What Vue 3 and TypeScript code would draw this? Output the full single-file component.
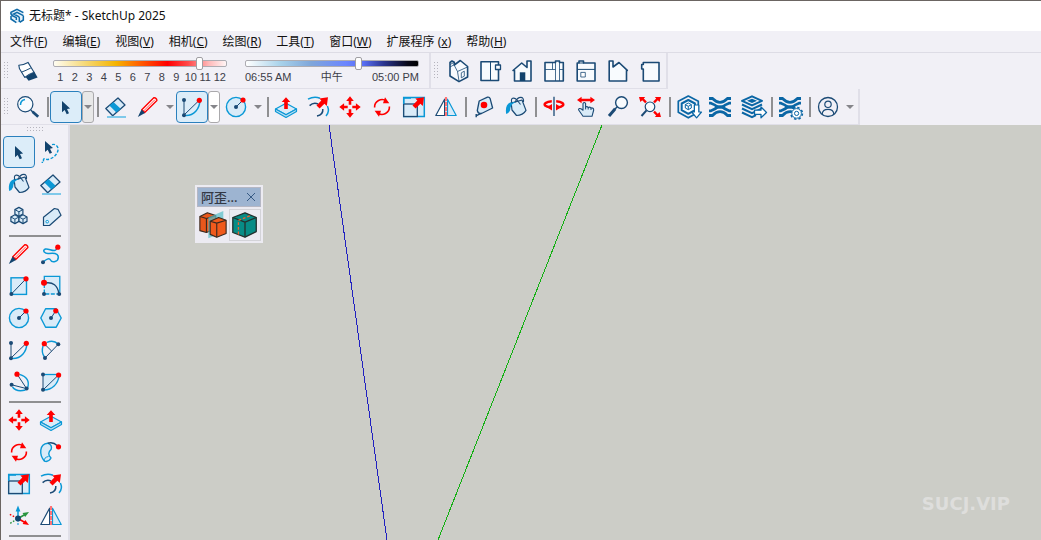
<script setup lang="ts">
import { ref } from 'vue'

interface Menu { label: string; key: string; spaced?: boolean }
interface Tool { kind: 'tool' | 'drop' | 'sep'; icon?: string; label?: string; active?: boolean; boxed?: 'grey' | 'white' }

const menus: Menu[] = [
  { label: '文件', key: 'F' },
  { label: '编辑', key: 'E' },
  { label: '视图', key: 'V' },
  { label: '相机', key: 'C' },
  { label: '绘图', key: 'R' },
  { label: '工具', key: 'T' },
  { label: '窗口', key: 'W' },
  { label: '扩展程序', key: 'x', spaced: true },
  { label: '帮助', key: 'H' },
]

const month = ref(86)
const time = ref(66)

const N = '#1b4a75'
const B = '#0a98d6'
const L = '#d9ebf8'
const R = '#ff0000'
const W = '#0a66a5'

const dot = (x: number, y: number, c = N, r = 2) => `<circle cx="${x}" cy="${y}" r="${r}" fill="${c}"/>`
const line = (d: string, c = N, w = 1, extra = '') => `<path d="${d}" fill="none" stroke="${c}" stroke-width="${w}" ${extra}/>`
const shape = (d: string, fill: string, stroke = 'none', w = 1.3) => `<path d="${d}" fill="${fill}" stroke="${stroke}" stroke-width="${w}" stroke-linejoin="round"/>`
const cube = (x: number, y: number) =>
  shape(`M${x} ${y - 4.4}l4 2.2v4.4l-4 2.2l-4-2.2v-4.4z`, L, N, 1.2) + line(`M${x - 4} ${y - 2.2}l4 2.2l4-2.2M${x} ${y}v4.4`, N, 1)

const diagonalArrow = shape('M22 2.2l-1.2 8.8l-2.4-2.3l-4.8 4.8l-3.1-3.1l4.8-4.8l-2-2z', R)
const weave =
  line('M1 3.5h3.5q7.5 7.6 15 0H23M1 8.2h2q4.5 1.6 6.4 3.8M23 8.2h-2q-4.5 1.6-6.4 3.8M1 20.5h3.5q7.5-7.6 15 0H23M1 15.8h2q4.5-1.6 6.4-3.8M23 15.8h-2q-4.5-1.6-6.4-3.8', W, 2.8) +
  line('M8 12h8', W, 3.4)

const icons: Record<string, string> = {
  logo: shape('M12 1L22 5.5V17.5L12 23L2 18V6z', '#e6f2fa') +
    line('M21.5 7L12 2L3 6.5Q2 10 6 12L11 14.5V18M21.5 11.5L12 6.5L7 9L14.5 13Q16 14 15.5 17.5V21M3 12v4.5L11 22M21.5 11.5V18L16 21.5', '#0f6aa8', 2.3),
  search: `<circle cx="9.3" cy="9.3" r="7.6" fill="#f8fbfe" stroke="${N}" stroke-width="1.2"/>` + line('M4.5 10Q4.5 5.5 9 4.6', B, 1.5) + line('M14.8 15l2.4 2.4', N, 1.4) + line('M16.6 16.8l5.6 5', N, 2.8),
  arrow: shape('M8 6v11.3l2.7-2.3l2 4.2l2.3-1l-2-4.2l3.1-.6z', '#12436d'),
  lasso: line('M13 4.6C17 3.6 20 7 18.8 11C17.6 16 12 19.5 8 19.5C6.5 19 5 18 4.5 19.5C4 21.5 6 22.5 2.6 22.4', B, 1.4, 'stroke-dasharray="3 1.6"') + shape('M6 1v11l2.7-2.3l2 4l2.3-1l-2-4l3-.6z', '#12436d'),
  eraser: shape('M14 3L21 10L8.7 20.7L1.8 13.5z', L, N, 1.3) + shape('M9.4 6.9L16.7 13.8L12.4 17.5L5.4 10.4z', B) + line('M3 22H22', '#72c4e9', 1.8),
  pencil: shape('M17.8 2.8Q20.8 2.6 20.9 5.6L8.7 17.6L5.8 14.8z', '#fff', R, 1.4) + line('M7.6 16L19 4.6', R, 0.7) + shape('M5.5 14.5L9 18L1.8 22z', '#12436d'),
  arc: line('M4 5V20L19 5.5') + line('M19.8 6C19.5 14 14 20.5 6 20.6', B, 1.5) + dot(4, 5) + dot(4, 20.3) + dot(19.3, 5.3, R, 2.6),
  circle: `<circle cx="12" cy="12" r="9.6" fill="${L}" stroke="${B}" stroke-width="1.4"/>` + line('M12 12L19 5') + dot(12, 12) + dot(19, 5, R, 2.6),
  push: shape('M12 8.3L22.5 14L12 19.8L1.5 14z', L, B, 1.2) + shape('M1.5 14L12 19.8L22.5 14V16.5L12 22.4L1.5 16.5z', '#bfe0f3', B, 1.2) + shape('M12 2.2l4.3 4.9h-2.5v7h-3.6v-7H7.7z', R),
  offset: line('M2 4.2Q8 .8 14 3.2M21.4 11Q24 16.6 20 21', B, 1.5) + line('M3.6 10.6Q7.5 7 12 9M16.8 14Q17.4 19.8 11 21', N, 1.5) + diagonalArrow,
  move: shape('M12 1.3l3.8 4.8h-2.5v3.6h-2.6V6.1H8.2zM12 22.7l-3.8-4.8h2.5v-3.6h2.6v3.6h2.5zM1.3 12l4.8-3.8v2.5h3.6v2.6H6.1v2.5zM22.7 12l-4.8 3.8v-2.5h-3.6v-2.6h3.6V8.2z', R),
  rotate: line('M4.6 12.5A7.5 7.5 0 0 1 16.5 6M19.4 11.5A7.5 7.5 0 0 1 7.5 18', R, 1.6) + shape('M15 2.3l4.3 5.9l-6.3 0zM9 21.7l-4.4-5.9h6.4z', R),
  scale: `<rect x="1.7" y="2.5" width="20.6" height="19" fill="${L}" stroke="${B}" stroke-width="1.5"/><rect x="1.7" y="9" width="13.6" height="12.5" fill="${L}" stroke="${N}" stroke-width="1.3"/>` + line('M1.7 9V3H9', B, 1.4) + diagonalArrow,
  mirror: shape('M10.6 4.2V20.5H1.8z', '#fff', N, 1.2) + shape('M13.5 4.2V20.5H22.2z', L, B, 1.2) + line('M12 2V22', '#ff7376', 2.1, 'stroke-dasharray="4 1"'),
  tape: shape('M7.2 6L15.5 2.2Q17.5 1.8 18.2 3.8L20.6 13L9.5 18.5Q6 19 5.3 15.5z', L, N, 1.3) + line('M9.5 18.2L4 20.8M4.2 19v3.2', N, 1.4) + dot(12, 10, R, 3.3),
  paint: shape('M7.2 8.2L18 5L22 15.4Q19 20.5 12.5 20.5L8 15z', L, N, 1.2) + shape('M2.2 19C.8 11 4 5.5 11.5 7.2C7 9 6.5 12 6.2 15Q5.2 18 2.2 19z', B) + line('M8 8C6 3 10 1.6 13 5L16.5 9.5M11 7.2C14 1 20.5.7 19.5 7', N, 1.1),
  orbit: line('M12 1.8V21', N, 1.3) + line('M9.8 6.3C4 6.7 1.5 9 3.2 10.6Q4.7 12 8.5 12.2M14.2 6.3C20.2 6.7 22.4 9 20.7 10.6Q19 12.2 15.5 12.3', R, 2.6) + shape('M10 8.9v6.7l-5.2-3.4zM14 8.9v6.7l5.2-3.4z', R),
  pan: shape('M9 21.3L4.5 14.8Q5 12.8 7 13.8L9 15.2V8.5Q10.3 6.6 11.6 8.5V12Q13 11 14.2 12.5Q15.8 11.6 17 13Q19.6 12.5 19.7 15L18 21.3z', L, N, 1.1) + line('M11.6 12v2.4M14.2 12.5v2M17 13v2', N, 1) + shape('M3 5l4.6-3.3v2h8.8v-2L21 5l-4.6 3.3v-2H7.6v2z', R),
  zoom: `<circle cx="15.5" cy="7.6" r="5.9" fill="#f8fbfe" stroke="${N}" stroke-width="1.4"/>` + line('M11.3 11.8L9 14', N, 1.5) + line('M9.2 13.8L3 21', N, 3),
  extents: `<circle cx="12" cy="11.8" r="4.8" fill="#f8fbfe" stroke="${N}" stroke-width="1.2"/>` + line('M8.5 15.4L3.5 21', N, 2) + shape('M1 2h6.2L5.8 3.6l3 3L7.2 8.2l-3-3L2.4 7zM23 2h-6.2l1.4 1.6l-3 3l1.6 1.6l3-3L21.6 7zM23 22h-6.2l1.4-1.6l-3-3l1.6-1.6l3 3l1.8-1.8z', R),
  warehouse: shape('M12.3 1l10 5.2v11L12.3 22.8l-10-5.6v-11z', '#f1f0f6', W, 1.7) + shape('M12.3 5l6.6 3.5v6.7l-6.6 3.6l-6.6-3.6V8.5z', '#f8fbfe', W, 2) + line('M12.3 8l3 1.6v3.4l-3 1.7l-3-1.7V9.6zM12.3 11.3l3-1.6M12.3 11.3v3.4M9.3 9.7l3 1.6', W, 1) + shape('M18.4 10h4.4v7h2.7l-4.9 5.8l-4.9-5.8h2.7z', '#fff', W, 1.2),
  weave,
  layers: shape('M12 1.3l10 4.5l-10 4.6L2 5.8z', '#f1f0f6', W, 2) + shape('M12 3.7l5 2.1l-5 2.2l-5-2.2z', W) + line('M2 9.5l10 4.6l10-4.6M2 13.5l10 4.6l10-4.6M2 17.5l10 4.6l4-2', W, 2) + shape('M14.5 15.2h6.5v-3.3l5.5 5.6l-5.5 5.3v-3.4h-6.5z', '#fff', W, 1.3),
  gearweave: weave + `<circle cx="18.6" cy="18.4" r="5.8" fill="#f1f0f6" stroke="${W}" stroke-width="1.6" stroke-dasharray="2.4 2.15"/><circle cx="18.6" cy="18.4" r="4.8" fill="#fff" stroke="${W}" stroke-width="1"/><circle cx="18.6" cy="18.4" r="2.1" fill="#fff" stroke="${W}" stroke-width="1"/>`,
  user: `<circle cx="12" cy="12" r="9.5" fill="none" stroke="${N}" stroke-width="1.3"/><circle cx="12" cy="9.3" r="3.2" fill="none" stroke="${N}" stroke-width="1.2"/>` + line('M6.2 19Q6.5 14.4 12 14.4T17.8 19', N, 1.2),
  shadow: shape('M9.5 17.8L18.4 12.8L21.6 18.4L12.6 21.8z', '#12436d') + shape('M2.8 6.2Q7.5 6 12 3.4L18 13.3Q13.5 14.8 8.8 18.5L3.5 9.8z', '#fff', N, 1.1) + line('M5.4 13.2Q10 11.5 14.8 9', N, 1),
  iso: shape('M4 17V3.5L6 2L8.3 3.3V6L14.3 1.5L21.6 7.5V18L13 22.6z', '#f8fbfe', N, 1.6) + line('M4 8L8 5.8L11.5 12.5L21.5 8M4 5.5L8 3.5M11.5 12.5L13 22M15.3 18.8v-5l3-1.6v5z', N, 0.8),
  top: shape('M3 2.7h17.5v18.8H3z', '#f8fbfe', N, 1.6) + line('M12.5 3v18.5', N, 1) + shape('M17.5 6h5v4.5h-5z', '#f8fbfe', N, 1.3),
  front: shape('M4.5 22V11.5H3L11.7 4L17 8.5V2H21V22z', '#f8fbfe', N, 1.6) + shape('M9.8 13.3h5.5V22H9.8z', '#12436d'),
  right: shape('M3 3.5H13.5V2H17.5V3.5H21.3V22H3z', '#f8fbfe', N, 1.6) + line('M3 10.5H13.5M17.5 10.5H21M13.5 3V22M17.5 3V22M10.5 3.5v7', N, 0.8),
  back: shape('M3.2 4H5V2H9.5V4H21V22H3.2z', '#f8fbfe', N, 1.6) + line('M3 10.4H21M5 4H10', N, 1) + shape('M6.8 13.4h4.5V18H6.8z', '#fff', N, 0.8),
  left: shape('M3.2 22V2H7V8L13 3.5L21.3 11.4H20.5V22z', '#f8fbfe', N, 1.6),
  bottom: shape('M5.3 3.5H21V22H5.3V10H3.7V5.5H5.3z', '#f8fbfe', N, 1.6),
  group: cube(11.9, 7.8) + cube(7.9, 15.2) + cube(16, 15.2),
  tag: shape('M4.5 13.2L15.4 4.5L19 5.3L22 11.2L10.5 21.5H4.5z', L, N, 1.2) + `<circle cx="8.2" cy="17.7" r="1.3" fill="#fff" stroke="${B}" stroke-width="1"/>`,
  freehand: line('M18 5.5C17 12 10 6 6.5 7C2.5 8.5 6 12 10 11.5C14 10.8 19 11 19.3 15C19.5 20 13 21 11.5 18C10 15 6 18.5 4 20', B, 1.5) + dot(4, 20.2) + dot(18.8, 5.2, R, 2.6),
  rect: `<rect x="4" y="3.8" width="15.5" height="16.6" fill="${L}" stroke="${B}" stroke-width="1.4"/>` + line('M4.4 20L19 4.8') + dot(4.4, 20) + dot(19, 4.8, R, 2.6),
  rotrect: shape('M5.3 2.2H20.8V20H5.3z', L) + line('M5.3 8V2.3H20.8V18', B, 1.3) + line('M5.3 10V20H20', B, 1.3, 'stroke-dasharray="4 1.5"') + line('M6 9Q18 7 20 20', N, 1.3) + dot(5, 20) + dot(20.2, 20) + dot(5, 8.8, R, 3),
  polygon: shape('M1.8 12L6.6 2.8H17.2L22.2 12L17.2 21.2H6.6z', L, B, 1.4) + line('M12 12L16.8 4.8') + dot(12, 12) + dot(16.8, 4.8, R, 2.6),
  arc2: line('M6 20L19.2 6.3M7 7.5L12.6 13') + line('M8 4.4Q14.5 1.5 19 6M4 8Q2 14.5 5.5 19', B, 1.4) + dot(6, 20) + dot(19.3, 6.2) + dot(5.3, 5.7, R, 2.6),
  arc3: line('M10 4L19.6 18.6L4.6 14.8') + line('M12.5 4.3Q24 8 20.5 18M5.5 17Q9.5 22.5 18.5 20', B, 1.4) + dot(4.6, 14.8) + dot(19.6, 18.6) + dot(10, 4.2, R, 2.6),
  pie: shape('M4 4.5H20Q19 18.5 4 20z', L) + line('M4 4.5H19', B, 1.3) + line('M20 6C19 14 13 20 5 20', B, 1.4) + line('M4 4.5V20L19.5 5') + dot(4, 4.4) + dot(4, 19.8) + dot(19.6, 5, R, 2.6),
  follow: shape('M8.8 3.2C0 4 0 15 5.5 21.2Q9.5 22.4 12 18C8.8 15 9.2 12 12.2 9.3Q13.5 5 8.8 3.2z', L, B, 1.4) + line('M5.5 21.2Q4.5 17.5 9.5 16.5', B, 1) + line('M8.8 3.2Q14.5 1.7 18 5.5', N, 1.3) + dot(19.5, 6.8, R, 2.6),
  axes: line('M11 14.5V5', B, 1.5) + line('M11 14.5L18 10.5', '#28953e', 1.5) + line('M11 14.5L18 18.5', R, 1.5) + shape('M11 1.5l2.4 6H8.6z', B) + shape('M22 8l-3.8 5l-2.7-4z', '#28953e') + shape('M22 21l-6.4-1l2.7-4z', R) + line('M10 14L2 10', R, 1.4, 'stroke-dasharray="1.6 1.6"') + line('M10 15L3 19.5', '#28953e', 1.4, 'stroke-dasharray="1.6 1.6"') + line('M11 16V22.5', B, 1.4, 'stroke-dasharray="1.6 1.6"') + dot(11, 14.5, '#12436d', 2.9),
}

const t = (icon: string, label: string, active = false): Tool => ({ kind: 'tool', icon, label, active })
const drop = (label: string, boxed?: 'grey' | 'white'): Tool => ({ kind: 'drop', label, boxed })
const sep: Tool = { kind: 'sep' }

const mainTools: Tool[] = [
  t('search', '搜索'), sep,
  t('arrow', '选择', true), drop('选择工具', 'grey'), sep,
  t('eraser', '擦除'), t('pencil', '直线'), drop('线条工具'),
  t('arc', '圆弧', true), drop('圆弧工具', 'white'),
  t('circle', '圆'), drop('形状工具'), sep,
  t('push', '推拉'), t('offset', '偏移'), t('move', '移动'), t('rotate', '旋转'), t('scale', '缩放'), t('mirror', '翻转'), sep,
  t('tape', '卷尺'), t('paint', '材质'), sep,
  t('orbit', '环绕观察'), t('pan', '平移'), t('zoom', '缩放视图'), t('extents', '充满视窗'), sep,
  t('warehouse', '模型库'), t('weave', '扩展程序库'), t('layers', '发送'), sep,
  t('gearweave', '扩展程序管理器'), sep,
  t('user', '帐户'), drop('帐户菜单'),
]

const views: Tool[] = [
  t('iso', '等轴'), t('top', '俯视'), t('front', '前视'), t('right', '右视'), t('back', '后视'), t('left', '左视'), t('bottom', '底视'),
]

const sideGroups: Tool[][] = [
  [t('arrow', '选择', true), t('lasso', '套索'), t('paint', '材质'), t('eraser', '擦除'), t('group', '组件'), t('tag', '标记')],
  [t('pencil', '直线'), t('freehand', '手绘线'), t('rect', '矩形'), t('rotrect', '旋转矩形'), t('circle', '圆'), t('polygon', '多边形'), t('arc', '圆弧'), t('arc2', '两点圆弧'), t('arc3', '三点圆弧'), t('pie', '扇形')],
  [t('move', '移动'), t('push', '推拉'), t('rotate', '旋转'), t('follow', '路径跟随'), t('scale', '缩放'), t('offset', '偏移'), t('axes', '坐标轴'), t('mirror', '翻转')],
]
</script>

<template>
  <div class="app">
    <header class="titlebar">
      <svg class="logo" viewBox="0 0 24 24" v-html="icons.logo"></svg>
      <span>无标题* - SketchUp 2025</span>
    </header>

    <nav class="menubar">
      <button v-for="m in menus" :key="m.key" type="button">{{ m.label }}{{ m.spaced ? ' ' : '' }}(<u>{{ m.key }}</u>)</button>
    </nav>

    <div class="toolrow">
      <section class="strip shadows">
        <i class="grip"></i>
        <button class="tool" type="button" aria-label="阴影"><svg viewBox="0 0 24 24" v-html="icons.shadow"></svg></button>
        <div class="slider-box">
          <input v-model="month" class="slider warm" type="range" min="0" max="100" aria-label="月份" />
          <div class="months"><span v-for="n in 12" :key="n">{{ n }}</span></div>
        </div>
        <div class="slider-box">
          <input v-model="time" class="slider cool" type="range" min="0" max="100" aria-label="时间" />
          <div class="times"><span>06:55 AM</span><span>中午</span><span>05:00 PM</span></div>
        </div>
      </section>
      <section class="strip">
        <i class="grip"></i>
        <button v-for="v in views" :key="v.icon" class="tool" type="button" :aria-label="v.label">
          <svg viewBox="0 0 24 24" v-html="icons[v.icon!]"></svg>
        </button>
      </section>
    </div>

    <div class="toolrow">
      <section class="strip main">
        <i class="grip"></i>
        <template v-for="(item, i) in mainTools" :key="i">
          <i v-if="item.kind === 'sep'" class="sep"></i>
          <button v-else-if="item.kind === 'drop'" class="drop" :class="item.boxed" type="button" :aria-label="item.label"></button>
          <button v-else class="tool" :class="{ active: item.active }" type="button" :aria-label="item.label">
            <svg viewBox="0 0 24 24" v-html="icons[item.icon!]"></svg>
          </button>
        </template>
      </section>
    </div>

    <div class="workspace">
      <aside class="sidebar">
        <i class="grip flat"></i>
        <template v-for="(group, g) in sideGroups" :key="g">
          <div class="group">
            <button v-for="s in group" :key="s.icon" class="tool" :class="{ active: s.active }" type="button" :aria-label="s.label">
              <svg viewBox="0 0 24 24" v-html="icons[s.icon!]"></svg>
            </button>
          </div>
          <i class="rule"></i>
        </template>
      </aside>

      <main class="canvas">
        <svg class="axes" width="100%" height="100%" shape-rendering="crispEdges">
          <line x1="259" y1="0" x2="317" y2="415" stroke="#2020c0" />
          <line x1="532" y1="0" x2="368" y2="415" stroke="#12b012" />
        </svg>

        <section class="palette">
          <header>
            <span>阿歪...</span>
            <button type="button" aria-label="关闭"><svg viewBox="0 0 10 10"><path d="M1 1L9 9M9 1L1 9" stroke="#365a84" fill="none" /></svg></button>
          </header>
          <div class="palette-tools">
            <button type="button" aria-label="切割">
              <svg viewBox="0 0 32 32" stroke-linejoin="round" stroke-width="1.2">
                <path d="M2 7L10 3L19 6V20L9 24L2 22z" fill="#e9571b" stroke="#3a2a20" />
                <path d="M2 7L9 9L19 6M9 9V24" fill="none" stroke="#3a2a20" />
                <path d="M11 8L27 1V24L11 30z" fill="#55bec8" fill-opacity=".7" />
                <path d="M13 12L22 8L30 11V25L20 29L13 26z" fill="#f05a1c" stroke="#3a2a20" />
                <path d="M13 12L20 14L30 11M20 14V29" fill="none" stroke="#3a2a20" />
              </svg>
            </button>
            <button class="framed" type="button" aria-label="盒子">
              <svg viewBox="0 0 32 32" stroke-linejoin="round" stroke-width="1.4">
                <path d="M3 8L16 3L28 8V23L16 29L3 24z" fill="#078c86" stroke="#24302e" />
                <path d="M3 8L16 13L28 8M16 13V29" fill="none" stroke="#24302e" />
                <path d="M9 26V11L22 6" fill="none" stroke="#ef6330" stroke-dasharray="3 2" />
              </svg>
            </button>
          </div>
        </section>

        <p class="mark">SUCJ.VIP</p>
      </main>
    </div>
  </div>
</template>

<style>
body {
  margin: 0;
  overflow: hidden;
}
</style>

<style scoped>
.app {
  display: flex;
  flex-direction: column;
  height: 100vh;
  box-sizing: border-box;
  border-top: 1px solid #6b6562;
  border-left: 1px solid #6b6562;
  background: #f1f0f6;
  color: #111;
  font: 12px/20px "Noto Sans", "Noto Sans CJK SC", sans-serif;
}
button {
  margin: 0;
  padding: 0;
  border: 0;
  background: none;
  color: inherit;
  font: inherit;
}
.titlebar {
  display: flex;
  flex: none;
  align-items: center;
  gap: 4px;
  height: 30px;
  padding-left: 8px;
  background: #fff;
}
.logo {
  width: 16px;
  height: 16px;
}
.menubar {
  display: flex;
  flex: none;
  align-items: center;
  height: 21px;
  padding-left: 1px;
  border-bottom: 1px solid #dddce5;
}
.menubar button {
  padding: 0 7px 0 8px;
  white-space: pre;
}
.toolrow {
  display: flex;
  flex: none;
  height: 36px;
}
.strip {
  display: flex;
  align-items: center;
  box-sizing: border-box;
  border-right: 2px solid #e0dfe8;
  border-bottom: 1px solid #e0dfe8;
}
.main {
  padding-right: 2px;
}
.grip {
  flex: none;
  width: 6px;
  height: 17px;
  margin: 0 2px 0 3px;
  background:
    repeating-linear-gradient(transparent 0 1px, #f1f0f6 1px 3px),
    repeating-linear-gradient(90deg, #b5b4bd 0 1px, transparent 1px 3px);
}
.grip.flat {
  width: 17px;
  height: 6px;
  margin: 2px auto 3px;
}
.tool {
  display: flex;
  flex: none;
  align-items: center;
  justify-content: center;
  box-sizing: border-box;
  width: 32px;
  height: 32px;
  border: 1px solid transparent;
  border-radius: 4px;
}
.tool svg {
  flex: none;
  width: 24px;
  height: 24px;
  overflow: visible;
}
.tool.active {
  border-color: #2a80bd;
  background: #dcedf9;
}
.drop {
  display: flex;
  flex: none;
  align-items: center;
  justify-content: center;
  box-sizing: border-box;
  width: 12px;
  height: 32px;
}
.drop::after {
  content: "";
  border: 4px solid transparent;
  border-top-color: #85858a;
  border-bottom: 0;
}
.drop.grey,
.drop.white {
  border: 1px solid #aaa9ac;
  border-radius: 3px;
  background: #e8e8e8;
}
.drop.white {
  background: #fff;
}
.sep {
  flex: none;
  width: 2px;
  height: 20px;
  margin: 0 1px 0 3px;
  background: #8f8f91;
}
.shadows {
  padding-right: 10px;
}
.slider-box {
  width: 174px;
  margin-left: 9px;
  color: #3c3d48;
  font: 11px/14px "Liberation Sans", "Noto Sans CJK SC", sans-serif;
}
.slider-box + .slider-box {
  margin-left: 18px;
}
.slider {
  display: block;
  width: 100%;
  height: 12px;
  margin: 0 0 1px;
  appearance: none;
  background: none;
}
.slider::-webkit-slider-runnable-track {
  box-sizing: border-box;
  height: 7px;
  border: 1px solid #adacb2;
  border-radius: 2px;
}
.warm::-webkit-slider-runnable-track {
  background: linear-gradient(90deg, #fffdf2, #f6d977 18%, #f5b400 36%, #ff6a00 48%, #f00 66%, #ff4a4a 78%, #ffb9b9 90%, #fff5f5);
}
.cool::-webkit-slider-runnable-track {
  background: linear-gradient(90deg, #fff, #a8d2ea 20%, #7fa6da 38%, #6b86ff 58%, #5a70f5 68%, #2b3590 80%, #080818 94%, #000);
}
.slider::-webkit-slider-thumb {
  appearance: none;
  box-sizing: border-box;
  width: 7px;
  height: 13px;
  margin-top: -4px;
  border: 1px solid #a09fa3;
  border-radius: 2px;
  background: #fff;
}
.months {
  display: grid;
  grid-template-columns: repeat(12, 1fr);
  text-align: center;
}
.times {
  display: flex;
  justify-content: space-between;
}
.workspace {
  display: flex;
  flex: 1;
  min-height: 0;
}
.sidebar {
  flex: none;
  box-sizing: border-box;
  width: 69px;
  padding-left: 2px;
  border-right: 2px solid #e0dfe8;
  overflow: hidden;
}
.sidebar .grip {
  display: block;
}
.group {
  display: grid;
  grid-template-columns: 32px 32px;
}
.rule {
  display: block;
  height: 2px;
  margin: 3px 7px 1px 6px;
  background: #8f8f91;
}
.canvas {
  position: relative;
  flex: 1;
  min-width: 0;
  overflow: hidden;
  background: #cccdc7;
}
.axes {
  display: block;
}
.palette {
  position: absolute;
  top: 60px;
  left: 125px;
  padding: 2px;
  background: #ecebf2;
}
.palette header {
  display: flex;
  align-items: center;
  justify-content: space-between;
  height: 18px;
  padding: 0 4px 0 3px;
  border: 1px solid #b5b7c4;
  background: #9db4d1;
  color: #333844;
  font-size: 13px;
  font-weight: 500;
}
.palette header button {
  display: flex;
}
.palette header svg {
  width: 10px;
  height: 10px;
}
.palette-tools {
  display: flex;
  margin-top: 2px;
}
.palette-tools button {
  display: flex;
  box-sizing: border-box;
  width: 32px;
  height: 32px;
  border: 1px solid transparent;
}
.palette-tools .framed {
  border-color: #d3d3d8;
}
.palette-tools svg {
  width: 30px;
  height: 30px;
}
.mark {
  position: absolute;
  right: 31px;
  bottom: 26px;
  margin: 0;
  color: #dededc;
  font: bold 18px/20px "DejaVu Sans", sans-serif;
}
</style>
